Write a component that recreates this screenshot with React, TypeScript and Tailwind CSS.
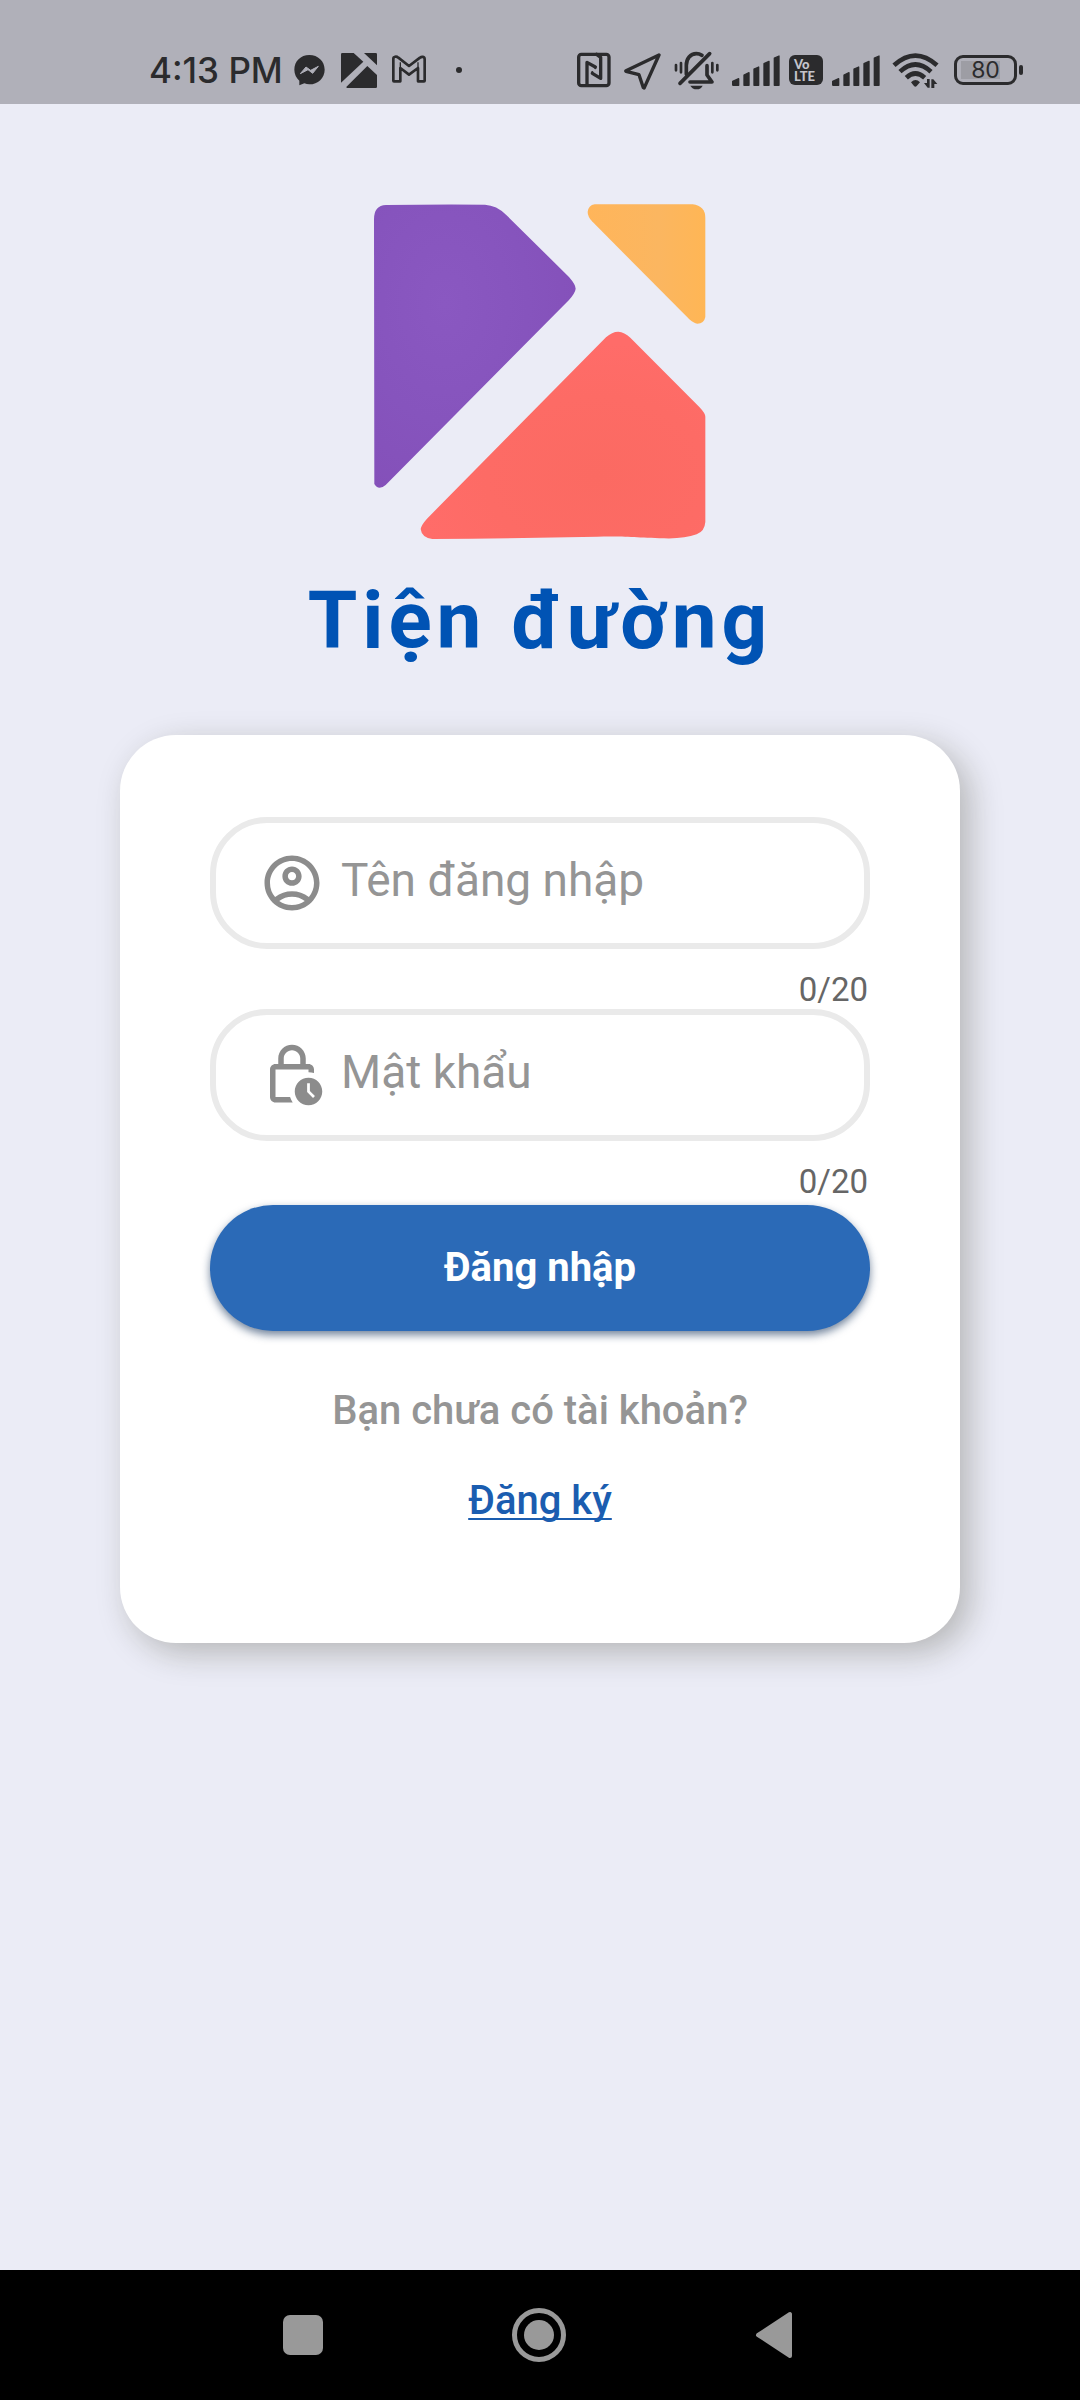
import { useState } from "react";
import type { ReactNode } from "react";
import { MdOutlineAccountCircle, MdOutlineLockClock } from "react-icons/md";

const INK = "#2b2b2d";

function MessengerIcon() {
  return (
    <svg className="ml-[11px] h-10 w-[31px] shrink-0" viewBox="488 60 93 120" aria-hidden="true">
      <path d="M534 75c-26 0-45 19-45 44 0 14 6 25 15 33v14l15-6c5 2 10 3 15 3 26 0 46-19 46-44s-20-44-46-44Z" fill={INK} />
      <path d="m507 131 17-20 14 10 23-12-17 21-14-11Z" fill="#b0b0b9" stroke="#b0b0b9" strokeWidth="3" strokeLinejoin="round" />
    </svg>
  );
}

function AppMarkIcon() {
  return (
    <svg className="ml-4 h-10 w-9 shrink-0" viewBox="630 60 108 120" aria-hidden="true">
      <g fill={INK}>
        <path d="M634 69h34l29 26-67 63V73q0-4 4-4Z" />
        <path d="M699 69h35q4 0 4 4v33Z" />
        <path d="M709 108l29 27v35q0 4-4 4h-86q-4 0 0-5Z" />
      </g>
    </svg>
  );
}

function GmailIcon() {
  return (
    <svg className="ml-[15px] h-10 w-[34px] shrink-0" viewBox="783 60 102 120" aria-hidden="true">
      <path
        d="M787 86v66q0 2 2 2h19v-40l26 20 27-20v40h18q2 0 2-2V88c0-9-9-9-14-5l-33 25-32-25c-6-5-15-3-15 3Z"
        fill="none"
        stroke={INK}
        strokeWidth="8"
        strokeLinejoin="round"
      />
      <path d="M808 116V97M861 116V97" stroke={INK} strokeWidth="4" />
    </svg>
  );
}

function NfcIcon() {
  return (
    <svg className="h-10 w-[34px] shrink-0" viewBox="50 60 102 120" aria-hidden="true">
      <g fill="none" stroke={INK} strokeLinejoin="round" strokeLinecap="round">
        <rect x="55" y="73" width="91" height="94" rx="8" strokeWidth="10" />
        <path d="M80 166V97l25 14" strokeWidth="10" />
        <path d="M96 130l25 15V82l-12-9" strokeWidth="10" />
        <path d="M105 111v4M96 126v4" strokeWidth="6" />
      </g>
    </svg>
  );
}

function LocationIcon() {
  return (
    <svg className="ml-[13px] h-10 w-[37px] shrink-0" viewBox="190 60 111 120" aria-hidden="true">
      <path d="m295 75-99 47q-1 1 0 2l39 10 13 39q2 2 3 0Z" fill="none" stroke={INK} strokeWidth="10" strokeLinejoin="round" />
    </svg>
  );
}

function SilentBellIcon() {
  return (
    <svg className="ml-[13px] h-10 w-[45px] shrink-0" viewBox="340 60 135 120" aria-hidden="true">
      <g fill="none" stroke={INK} strokeLinecap="round" strokeLinejoin="round">
        <path d="M377 133v-27c0-20 12-35 30-35q9 0 17 5" strokeWidth="11" />
        <path d="M388 156h66l-15-21v-28" strokeWidth="11" />
        <path d="M358 160 447 71" strokeWidth="11" />
        <path d="M346 105v16M361 99v28M455 99v28M470 105v16" strokeWidth="8" />
      </g>
      <path d="M389 167h37q-5 11-18 11t-19-11Z" fill={INK} />
    </svg>
  );
}

function SignalIcon() {
  return (
    <svg className="h-10 w-12 shrink-0" viewBox="516 60 144 120" aria-hidden="true">
      <g fill={INK} stroke={INK} strokeWidth="4" strokeLinejoin="round">
        <path d="M518 154l18-8v20h-16q-2 0-2-2Z" />
        <path d="M552 135l15-7v38h-15Z" />
        <path d="M582 117l14-6v55h-14Z" />
        <path d="M612 101l15-7v72h-15Z" />
        <path d="M643 84l14-6v88h-14Z" />
      </g>
    </svg>
  );
}

function WifiIcon() {
  return (
    <svg className="ml-3 h-10 w-[47px] shrink-0" viewBox="307 60 141 120" aria-hidden="true">
      <g fill="none" stroke={INK} strokeWidth="14">
        <path d="M313 106q64-58 129 0" />
        <path d="M331 125q46-43 93 0" />
        <path d="M350 143q27-25 55 0" />
      </g>
      <path d="M364 157q14-14 27 0l-10 11q-4 4-8 0Z" fill={INK} />
      <path d="M403 159h9v-12h8v26h-6ZM425 174v-26h6l12 14h-9v12Z" fill={INK} />
    </svg>
  );
}

function BrandLogo() {
  return (
    <svg className="h-[335px] w-[332px]" viewBox="70 72 996 1005" role="img" aria-label="Tiện đường">
      <defs>
        <radialGradient id="violet" cx="0.35" cy="0.35" r="0.75">
          <stop offset="0" stopColor="#8a58c1" />
          <stop offset="0.55" stopColor="#8654bd" />
          <stop offset="1" stopColor="#8450b9" />
        </radialGradient>
        <linearGradient id="amber" x1="0" y1="0" x2="1" y2="0">
          <stop offset="0" stopColor="#ffb55a" />
          <stop offset="0.6" stopColor="#fbb660" />
          <stop offset="1" stopColor="#ffb655" />
        </linearGradient>
        <radialGradient id="coral" cx="0.62" cy="0.7" r="0.65">
          <stop offset="0" stopColor="#fb6a62" />
          <stop offset="0.6" stopColor="#fd6b65" />
          <stop offset="1" stopColor="#ff6c69" />
        </radialGradient>
      </defs>
      <path
        d="M106 75Q250 73 403 74Q438 76 466 104L655 291Q675 314 675 326Q674 338 655 360L105 915Q96 923 87 923Q77 923 71 912L70 118Q70 76 106 75Z"
        fill="url(#violet)"
      />
      <path d="M732 73H1026Q1064 78 1064 114V411Q1060 431 1040 431Q1029 430 1016 418L724 124Q711 110 711 96Q713 76 732 73Z" fill="url(#amber)" />
      <path
        d="M766 472Q784 455 803 455Q821 456 839 473L1046 681Q1064 700 1064 710V1026Q1062 1054 1038 1063Q1000 1077 940 1075C850 1073 820 1068 740 1070Q500 1075 245 1077Q213 1073 210 1047Q212 1035 229 1016Z"
        fill="url(#coral)"
      />
    </svg>
  );
}

function StatusBar() {
  return (
    <header className="flex h-[104px] shrink-0 items-center justify-between bg-[#b0b0b9] pr-[57px] pl-[149px] pt-9 text-[#2b2b2d]">
      <div className="flex items-center">
        <time className="font-[Inter] text-[35px] leading-10 font-medium whitespace-nowrap">4:13 PM</time>
        <MessengerIcon />
        <AppMarkIcon />
        <GmailIcon />
        <span className="ml-[30px] size-1.5 rounded-full bg-[#2b2b2d]" />
      </div>
      <div className="flex items-center">
        <NfcIcon />
        <LocationIcon />
        <SilentBellIcon />
        <div className="mr-[9px] ml-[13px]">
          <SignalIcon />
        </div>
        <div className="flex h-[30px] w-[34px] flex-col items-start justify-center rounded-md bg-[#2b2b2d] pl-[5px] font-[Lato] text-[13px] leading-[12px] font-black text-[#c4c4cb]">
          <span>Vo</span>
          <span>LTE</span>
        </div>
        <div className="ml-[9px]">
          <SignalIcon />
        </div>
        <WifiIcon />
        <div className="ml-[15px] flex h-[30px] w-[63px] items-center justify-center rounded-[9px] border-3 border-[#2b2b2d] bg-[linear-gradient(90deg,transparent_4px,#9d9da4_4px,#9d9da4_43px,transparent_43px)] bg-[length:100%_18px] bg-center bg-no-repeat font-[Inter] text-[23px] leading-6">
          80
        </div>
        <span className="ml-[2px] h-2.5 w-1 rounded-sm bg-[#2b2b2d]" />
      </div>
    </header>
  );
}

type FieldProps = {
  id: string;
  label: string;
  type: string;
  icon: ReactNode;
};

function Field({ id, label, type, icon }: FieldProps) {
  const [value, setValue] = useState("");
  return (
    <div>
      <label
        htmlFor={id}
        className="flex h-[132px] items-center gap-4 rounded-[57px] border-6 border-[#eaeaea] px-[43px] text-[#8c8c8c]"
      >
        {icon}
        <input
          id={id}
          type={type}
          aria-label={label}
          placeholder={label}
          maxLength={20}
          value={value}
          onChange={(e) => setValue(e.target.value)}
          className="w-full min-w-0 bg-transparent pb-1.5 text-[46px] leading-[54px] text-[#333] outline-none placeholder:text-[#959595]"
        />
      </label>
      <p className="mt-[21px] pr-[2px] text-right text-[33px] leading-[39px] text-[#666]">{value.length}/20</p>
    </div>
  );
}

function NavigationBar() {
  return (
    <nav className="flex h-[130px] shrink-0 items-center justify-between bg-black pr-[277px] pl-[275px] text-[#999]">
      <button type="button" aria-label="Recent apps" className="flex size-14 items-center justify-center">
        <span className="size-10 rounded-[7px] bg-[#999]" />
      </button>
      <button type="button" aria-label="Home" className="flex size-14 items-center justify-center">
        <svg className="size-14" viewBox="0 0 56 56" aria-hidden="true">
          <circle cx="28" cy="28" r="24.5" fill="none" stroke="currentColor" strokeWidth="5" />
          <circle cx="28" cy="28" r="15" fill="currentColor" />
        </svg>
      </button>
      <button type="button" aria-label="Back" className="flex size-14 items-center justify-center">
        <svg className="size-14" viewBox="0 0 56 56" aria-hidden="true">
          <path d="M43 7v42L11 28Z" fill="currentColor" stroke="currentColor" strokeWidth="4" strokeLinejoin="round" />
        </svg>
      </button>
    </nav>
  );
}

export default function App() {
  return (
    <div className="flex min-h-screen flex-col bg-[#ebecf6] font-[Roboto,sans-serif]">
      <StatusBar />
      <main className="flex flex-1 flex-col items-center px-[120px] pt-[100px] pb-20">
        <BrandLogo />
        <h1 className="mt-[34px] text-[80px] leading-[96px] font-bold tracking-[5px] whitespace-nowrap text-[#0053b4]">
          Tiện đường
        </h1>
        <form
          onSubmit={(e) => e.preventDefault()}
          className="mt-[66px] flex w-full flex-col rounded-[56px] bg-white px-[90px] pt-[82px] pb-[118px] shadow-[10px_10px_32px_rgba(40,40,20,0.27)]"
        >
          <Field id="username" label="Tên đăng nhập" type="text" icon={<MdOutlineAccountCircle className="size-[66px] shrink-0" />} />
          <Field id="password" label="Mật khẩu" type="password" icon={<MdOutlineLockClock className="size-[66px] shrink-0" />} />
          <button
            type="submit"
            className="mt-1 h-[126px] rounded-full bg-[#2b6ab7] text-[40px] leading-[48px] font-bold text-white shadow-[0_4px_8px_rgba(20,50,90,0.6)]"
          >
            Đăng nhập
          </button>
          <p className="mt-14 text-center text-[40px] leading-[48px] font-medium text-[#959595]">Bạn chưa có tài khoản?</p>
          <a
            href="#register"
            className="mt-[42px] self-center text-[40px] leading-[48px] font-medium text-[#1b5db0] underline decoration-2 underline-offset-4 [text-decoration-skip-ink:none]"
          >
            Đăng ký
          </a>
        </form>
      </main>
      <NavigationBar />
    </div>
  );
}
